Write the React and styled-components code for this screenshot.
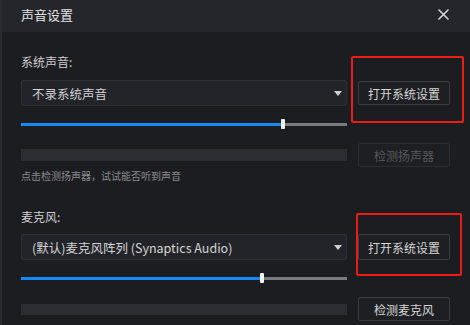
import styled, { createGlobalStyle } from "styled-components";

const GlobalStyle = createGlobalStyle`
  html, body {
    margin: 0;
    padding: 0;
    background: #1c1d21;
  }
  * {
    box-sizing: border-box;
  }
`;

const Dialog = styled.div`
  position: relative;
  width: 470px;
  height: 325px;
  overflow: hidden;
  background: #1c1d21;
  border-left: 2px solid #2a2b30;
  font-family: "Noto Sans CJK SC", "Noto Sans", sans-serif;
  color: #d2d2d2;
  display: flex;
  flex-direction: column;
`;

const Header = styled.div`
  height: 32px;
  flex-shrink: 0;
  background: #25262b;
  display: flex;
  align-items: center;
  justify-content: space-between;
  padding: 0 20px 4px 19px;
`;

const Title = styled.div`
  font-size: 13px;
  color: #e4e4e4;
`;

const CloseButton = styled.button`
  width: 14px;
  height: 14px;
  padding: 0;
  border: none;
  background: none;
  display: flex;
  align-items: center;
  justify-content: center;
  cursor: pointer;
`;

const Body = styled.div`
  padding: 22px 20px 0 19px;
  display: flex;
  flex-direction: column;
`;

const Label = styled.div`
  height: 16px;
  line-height: 16px;
  font-size: 12px;
  color: #cfcfcf;
  margin-top: ${(p) => p.$gap || 0}px;
`;

const Row = styled.div`
  display: grid;
  grid-template-columns: 326px 92px;
  column-gap: 11px;
  align-items: center;
  margin-top: ${(p) => p.$gap || 0}px;
`;

const Select = styled.div`
  height: 26px;
  background: #232429;
  border: 1px solid #2f3035;
  border-radius: 2px;
  display: flex;
  align-items: center;
  justify-content: space-between;
  padding: 0 4px 0 10px;
  font-size: 12.5px;
  color: #d4d4d4;
`;

const Arrow = styled.span`
  width: 0;
  height: 0;
  border-left: 4px solid transparent;
  border-right: 4px solid transparent;
  border-top: 5px solid #d0d0d0;
`;

const Button = styled.button`
  height: ${(p) => p.$h || 24}px;
  background: #1e1f23;
  border: 1px solid ${(p) => (p.disabled ? "#2c2d31" : "#3a3b40")};
  border-radius: 2px;
  color: ${(p) => (p.disabled ? "#56575b" : "#d6d6d6")};
  font-family: inherit;
  font-size: 12px;
  padding: 0;
  cursor: ${(p) => (p.disabled ? "default" : "pointer")};
`;

const SliderTrack = styled.div`
  position: relative;
  width: 326px;
  height: 10px;
  display: flex;
  align-items: center;
  margin-top: ${(p) => p.$gap || 0}px;
`;

const TrackRail = styled.div`
  width: 100%;
  height: 3px;
  background: #7b7b7d;
  display: flex;
`;

const TrackFill = styled.div`
  height: 100%;
  background: #1689f5;
`;

const Thumb = styled.div`
  position: absolute;
  top: 0;
  width: 4px;
  height: 10px;
  margin-left: -2px;
  background: #f2f2f2;
  border-radius: 1px;
`;

const Meter = styled.div`
  height: ${(p) => p.$h || 12}px;
  background: #2d2e33;
`;

const Hint = styled.div`
  height: 14px;
  line-height: 14px;
  font-size: 10px;
  color: #8a8a8c;
  margin-top: 2px;
`;

const Annotation = styled.div`
  position: absolute;
  border: 2px solid #ee1c16;
  border-radius: 2px;
  pointer-events: none;
`;

function Slider({ value, gap }) {
  return (
    <SliderTrack $gap={gap}>
      <TrackRail>
        <TrackFill style={{ width: `${value}%` }} />
      </TrackRail>
      <Thumb style={{ left: `${value}%` }} />
    </SliderTrack>
  );
}

export default function App() {
  return (
    <>
      <GlobalStyle />
      <Dialog>
        <Header>
          <Title>声音设置</Title>
          <CloseButton aria-label="关闭">
            <svg width="11" height="11" viewBox="0 0 11 11">
              <path d="M1 1L10 10M10 1L1 10" stroke="#d8d8d8" strokeWidth="1.6" strokeLinecap="round" />
            </svg>
          </CloseButton>
        </Header>
        <Body>
          <Label>系统声音:</Label>
          <Row $gap={10}>
            <Select>
              <span>不录系统声音</span>
              <Arrow />
            </Select>
            <Button>打开系统设置</Button>
          </Row>
          <Slider value={80.5} gap={13} />
          <Row $gap={14}>
            <Meter />
            <Button disabled>检测扬声器</Button>
          </Row>
          <Hint>点击检测扬声器，试试能否听到声音</Hint>

          <Label $gap={26}>麦克风:</Label>
          <Row $gap={9}>
            <Select>
              <span>(默认)麦克风阵列 (Synaptics Audio)</span>
              <Arrow />
            </Select>
            <Button $h={26}>打开系统设置</Button>
          </Row>
          <Slider value={73.8} gap={13} />
          <Row $gap={14}>
            <Meter $h={11} />
            <Button>检测麦克风</Button>
          </Row>
        </Body>
        <Annotation style={{ left: 349, top: 56, width: 113, height: 67 }} />
        <Annotation style={{ left: 354, top: 213, width: 106, height: 63 }} />
      </Dialog>
    </>
  );
}
